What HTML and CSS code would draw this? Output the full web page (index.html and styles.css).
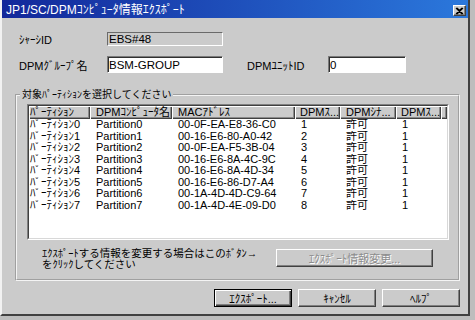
FILE: index.html
```html
<!DOCTYPE html>
<html>
<head>
    <meta charset="utf-8">
    <title>JP1/SC/DPMｺﾝﾋﾟｭｰﾀ情報ｴｸｽﾎﾟｰﾄ</title>
    <link rel="stylesheet" href="styles.css">
</head>

<body>
<!-- Export dialog window -->
<div class="window">
    <div class="title-bar">
        <span class="title-text">JP1/SC/DPMｺﾝﾋﾟｭｰﾀ情報ｴｸｽﾎﾟｰﾄ</span>
        <button class="close-btn">
            <svg xmlns="http://www.w3.org/2000/svg" viewBox="0 0 9 8" width="9" height="8">
                <path d="M1 1L7 7M2 1L8 7M7 1L1 7M8 1L2 7" stroke="#000" stroke-width="1.1" fill="none"/>
            </svg>
        </button>
    </div>

    <div class="dialog-body">
        <div class="form-row chassis-row">
            <span class="label">ｼｬｰｼID</span>
            <input class="field readonly" type="text" value="EBS#48" readonly>
        </div>
        <div class="form-row group-row">
            <span class="label">DPMｸﾞﾙｰﾌﾟ名</span>
            <input class="field" type="text" value="BSM-GROUP">
            <span class="label unit-label">DPMﾕﾆｯﾄID</span>
            <input class="field unit-field" type="text" value="0">
        </div>

        <fieldset class="group">
            <legend>対象ﾊﾟｰﾃｨｼｮﾝを選択してください</legend>
            <div class="listview">
                <div class="listview-inner">
                    <table>
                        <colgroup>
                            <col class="c1"><col class="c2"><col class="c3">
                            <col class="c4"><col class="c5"><col class="c6"><col>
                        </colgroup>
                        <thead>
                            <tr>
                                <th class="first">ﾊﾟｰﾃｨｼｮﾝ</th>
                                <th>DPMｺﾝﾋﾟｭｰﾀ名</th>
                                <th>MACｱﾄﾞﾚｽ</th>
                                <th class="narrow">DPMｽ...</th>
                                <th>DPMｼﾅ...</th>
                                <th class="narrow">DPMｽ...</th>
                                <th></th>
                            </tr>
                        </thead>
                        <tbody>
                            <tr><td class="first">ﾊﾟｰﾃｨｼｮﾝ0</td><td>Partition0</td><td>00-0F-EA-E8-36-C0</td><td>1</td><td>許可</td><td>1</td><td></td></tr>
                            <tr><td class="first">ﾊﾟｰﾃｨｼｮﾝ1</td><td>Partition1</td><td>00-16-E6-80-A0-42</td><td>2</td><td>許可</td><td>1</td><td></td></tr>
                            <tr><td class="first">ﾊﾟｰﾃｨｼｮﾝ2</td><td>Partition2</td><td>00-0F-EA-F5-3B-04</td><td>3</td><td>許可</td><td>1</td><td></td></tr>
                            <tr><td class="first">ﾊﾟｰﾃｨｼｮﾝ3</td><td>Partition3</td><td>00-16-E6-8A-4C-9C</td><td>4</td><td>許可</td><td>1</td><td></td></tr>
                            <tr><td class="first">ﾊﾟｰﾃｨｼｮﾝ4</td><td>Partition4</td><td>00-16-E6-8A-4D-34</td><td>5</td><td>許可</td><td>1</td><td></td></tr>
                            <tr><td class="first">ﾊﾟｰﾃｨｼｮﾝ5</td><td>Partition5</td><td>00-16-E6-86-D7-A4</td><td>6</td><td>許可</td><td>1</td><td></td></tr>
                            <tr><td class="first">ﾊﾟｰﾃｨｼｮﾝ6</td><td>Partition6</td><td>00-1A-4D-4D-C9-64</td><td>7</td><td>許可</td><td>1</td><td></td></tr>
                            <tr><td class="first">ﾊﾟｰﾃｨｼｮﾝ7</td><td>Partition7</td><td>00-1A-4D-4E-09-D0</td><td>8</td><td>許可</td><td>1</td><td></td></tr>
                        </tbody>
                    </table>
                </div>
            </div>
            <div class="group-footer">
                <p class="hint">ｴｸｽﾎﾟｰﾄする情報を変更する場合はこのﾎﾞﾀﾝ→<br>をｸﾘｯｸしてください</p>
                <button class="btn change-btn" disabled>ｴｸｽﾎﾟｰﾄ情報変更...</button>
            </div>
        </fieldset>

        <div class="button-row">
            <button class="btn default">ｴｸｽﾎﾟｰﾄ...</button>
            <button class="btn">ｷｬﾝｾﾙ</button>
            <button class="btn">ﾍﾙﾌﾟ</button>
        </div>
    </div>
</div>
</body>
</html>
```

FILE: styles.css
```css
body {
    margin: 0;
    background-color: #bdbdbd;
    font-family: "Liberation Sans", "Noto Sans CJK JP", sans-serif;
    color: #000000;
}
.window {
    width: 470px;
    height: 316px;
    box-sizing: border-box;
    display: flex;
    flex-direction: column;
    background-color: #cbcbcb;
    border-left: 2px solid #f2f2f2;
    border-right: 2px solid #404040;
    border-bottom: 2px solid #404040;
}
/* Title bar */
.title-bar {
    height: 18px;
    box-sizing: border-box;
    padding: 3px 2px 0 4px;
    display: flex;
    align-items: center;
    justify-content: space-between;
    background: linear-gradient(to right, #12279a, #2b78dc);
}
.title-text {
    color: #FFFFFF;
    font-size: 12px;
    line-height: 15px;
    white-space: nowrap;
}
.close-btn {
    width: 13px;
    height: 11px;
    padding: 0;
    margin: 0;
    display: flex;
    align-items: center;
    justify-content: center;
    background-color: #cbcbcb;
    border: 1px solid;
    border-color: #FFFFFF #404040 #404040 #FFFFFF;
    box-shadow: inset -1px -1px #808080;
}
/* Form area */
.dialog-body {
    flex: 1;
    padding: 13px 8px 0 13px;
    display: flex;
    flex-direction: column;
}
.form-row {
    display: flex;
    align-items: center;
    padding-left: 4px;
}
.group-row {
    margin-top: 9px;
}
.label {
    width: 88px;
    font-size: 11px;
    white-space: nowrap;
}
.unit-label {
    width: 81px;
    margin-left: 24px;
}
.field {
    width: 116px;
    height: 17px;
    box-sizing: border-box;
    margin: 0;
    padding: 0 1px;
    font-family: "Liberation Sans", "Noto Sans CJK JP", sans-serif;
    font-size: 11.5px;
    color: #000000;
    background-color: #FFFFFF;
    border: 1px solid;
    border-color: #7a7a7a #FFFFFF #FFFFFF #7a7a7a;
    box-shadow: inset 1px 1px #303030;
    outline: none;
}
.field.readonly {
    height: 14px;
    background-color: #cbcbcb;
    box-shadow: none;
    border-color: #6a6a6a #FFFFFF #FFFFFF #6a6a6a;
}
.unit-field {
    width: 78px;
}
/* Group box */
.group {
    margin: 16px 0 0 0;
    padding: 0 0 9px 0;
    min-width: 0;
    border: 2px groove #f4f4f4;
}
.group legend {
    margin-left: 3px;
    padding: 0 2px;
    font-size: 10px;
    line-height: 12px;
}
.listview {
    margin: 3px 0 0 10px;
    width: 422px;
    height: 136px;
    box-sizing: border-box;
    border: 1px solid;
    border-color: #808080 #FFFFFF #FFFFFF #808080;
}
.listview-inner {
    height: 100%;
    box-sizing: border-box;
    overflow: hidden;
    background-color: #FFFFFF;
    border: 1px solid;
    border-color: #404040 #d8d8d8 #d8d8d8 #404040;
}
.listview table {
    width: 100%;
    table-layout: fixed;
    border-collapse: collapse;
    font-size: 11px;
}
.c1 { width: 61px; }
.c2 { width: 82px; }
.c3 { width: 123px; }
.c4 { width: 45px; }
.c5 { width: 56px; }
.c6 { width: 45px; }
.listview th {
    height: 13px;
    padding: 0 0 0 6px;
    font-weight: normal;
    text-align: left;
    white-space: nowrap;
    overflow: hidden;
    line-height: 13px;
    background-color: #cbcbcb;
    box-shadow: inset 1px 1px #FFFFFF, inset -1px -1px #404040, inset -2px -2px #8a8a8a;
}
.listview th.narrow {
    padding-left: 5px;
}
.listview td {
    height: 11.5px;
    padding: 0 0 0 6px;
    line-height: 11.5px;
    white-space: nowrap;
    overflow: hidden;
}
.listview .first {
    padding-left: 1px;
}
.group-footer {
    margin-top: 8px;
    padding: 0 25px;
    display: flex;
    align-items: flex-start;
    justify-content: space-between;
}
.hint {
    margin: 0;
    font-size: 10.5px;
    line-height: 11px;
    white-space: nowrap;
}
/* Push buttons */
.btn {
    width: 78px;
    height: 18px;
    margin: 0;
    padding: 0;
    font-family: "Liberation Sans", "Noto Sans CJK JP", sans-serif;
    font-size: 11px;
    color: #000000;
    background-color: #cbcbcb;
    border: 1px solid;
    border-color: #FFFFFF #404040 #404040 #FFFFFF;
    box-shadow: inset -1px -1px #808080;
}
.btn.default {
    border-color: #000000;
    box-shadow: inset 1px 1px #FFFFFF, inset -1px -1px #404040, inset -2px -2px #808080;
}
.change-btn {
    width: 157px;
    margin-top: 1px;
    color: #8c8c8c;
    text-shadow: 1px 1px #FFFFFF;
}
.button-row {
    margin-top: 8px;
    display: flex;
    justify-content: flex-end;
    gap: 6px;
}
```
